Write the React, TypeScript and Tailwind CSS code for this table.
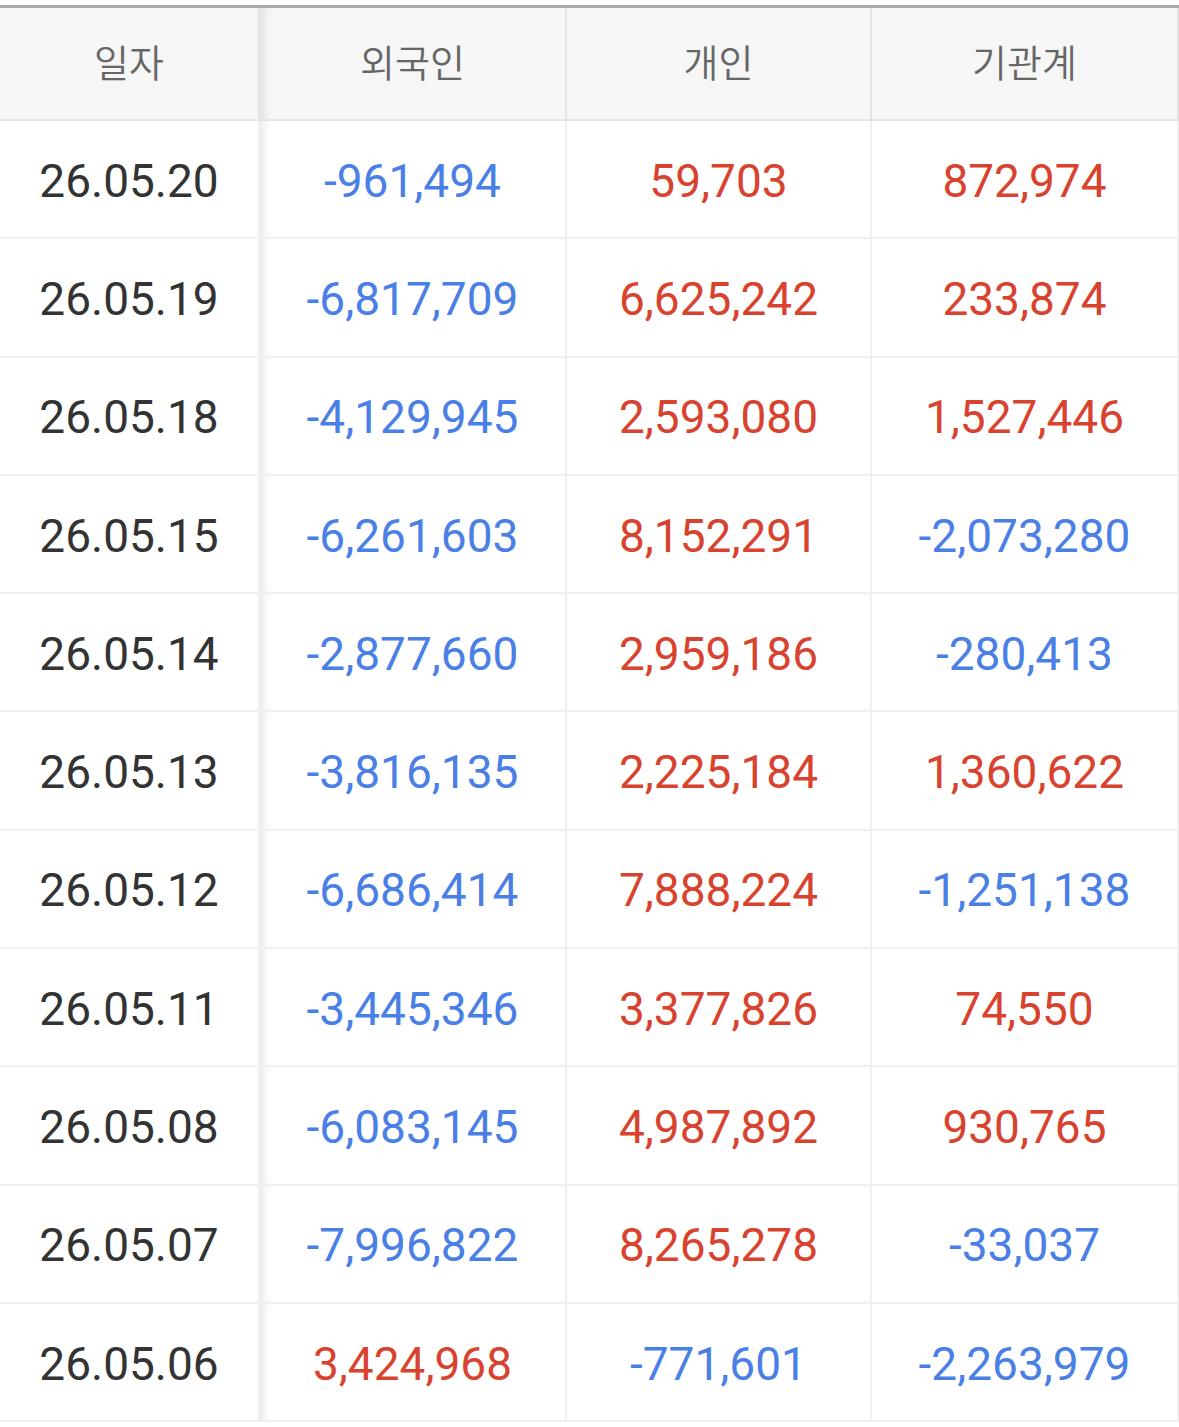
import React from "react";

type Row = [string, string, string, string];

const rows: Row[] = [
  ["26.05.20", "-961,494", "59,703", "872,974"],
  ["26.05.19", "-6,817,709", "6,625,242", "233,874"],
  ["26.05.18", "-4,129,945", "2,593,080", "1,527,446"],
  ["26.05.15", "-6,261,603", "8,152,291", "-2,073,280"],
  ["26.05.14", "-2,877,660", "2,959,186", "-280,413"],
  ["26.05.13", "-3,816,135", "2,225,184", "1,360,622"],
  ["26.05.12", "-6,686,414", "7,888,224", "-1,251,138"],
  ["26.05.11", "-3,445,346", "3,377,826", "74,550"],
  ["26.05.08", "-6,083,145", "4,987,892", "930,765"],
  ["26.05.07", "-7,996,822", "8,265,278", "-33,037"],
  ["26.05.06", "3,424,968", "-771,601", "-2,263,979"],
];

function NumCell({ v, first }: { v: string; first?: boolean }) {
  const neg = v.startsWith("-");
  return (
    <div
      className={
        "flex h-[118.3px] items-center justify-center border-r-2 border-b-2 border-[#f0f0f0] bg-white pt-[4px] text-[46px] " +
        (neg ? "text-[#4a80e6] " : "text-[#d8432f] ") +
        (first ? "shadow-[inset_14px_0_10px_-10px_rgba(0,0,0,0.09)]" : "")
      }
    >
      {v}
    </div>
  );
}

export default function App() {
  const headers = ["일자", "외국인", "개인", "기관계"];
  return (
    <div className="w-[1179px] h-[1427px] overflow-hidden bg-white pt-[5px]" style={{ fontFamily: "Roboto, 'Noto Sans CJK KR', sans-serif" }}>
      <div className="border-t-[3px] border-[#aaaaaa]">
        <div className="grid grid-cols-[260px_307px_305px_307px]">
          {headers.map((h, i) => (
            <div
              key={h}
              className={
                "flex h-[113px] items-center justify-center border-b-2 border-r-2 border-[#e4e4e4] bg-[#f6f6f6] pb-[6px] text-[38px] text-[#666666] " +
                (i === 1 ? "shadow-[inset_14px_0_10px_-10px_rgba(0,0,0,0.09)]" : "")
              }
              style={{ fontFamily: "'Noto Sans CJK KR', sans-serif", fontWeight: 350 }}
            >
              {h}
            </div>
          ))}
          {rows.map((r) => (
            <React.Fragment key={r[0]}>
              <div className="flex h-[118.3px] items-center justify-center border-r-2 border-b-2 border-[#f0f0f0] bg-white pt-[4px] text-[46px] text-[#333333]">
                {r[0]}
              </div>
              <NumCell v={r[1]} first />
              <NumCell v={r[2]} />
              <NumCell v={r[3]} />
            </React.Fragment>
          ))}
        </div>
      </div>
    </div>
  );
}
